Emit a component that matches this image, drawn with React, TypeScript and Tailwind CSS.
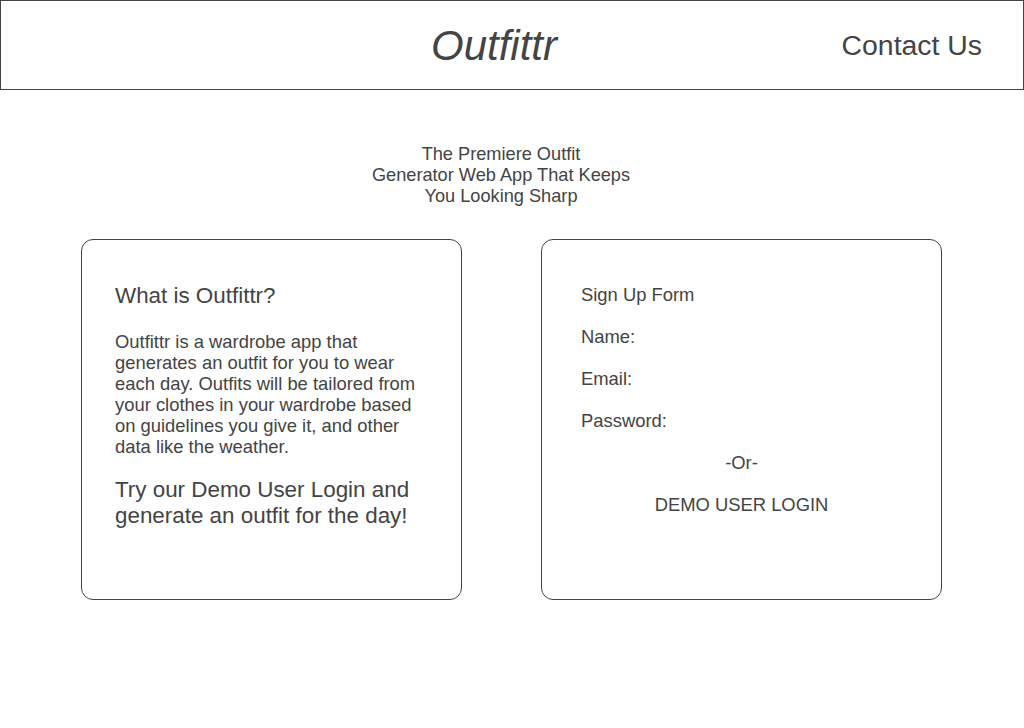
export default function App() {
  return (
    <div className="min-h-[728px] bg-white text-[#444] font-['Liberation_Sans',Arial,sans-serif]">
      {/* Header */}
      <header className="h-[90px] border border-[#444] flex items-center">
        <h1 className="ml-[430px] mt-[2px] text-[42px] italic leading-none">Outfittr</h1>
        <a href="#contact" className="ml-auto mr-[41px] mt-[1px] text-[28.4px] leading-none">
          Contact Us
        </a>
      </header>

      {/* Tagline */}
      <p className="mt-[54px] ml-[351px] w-[300px] text-center text-[18.2px] leading-[21px]">
        The Premiere Outfit
        <br />
        Generator Web App That Keeps
        <br />
        You Looking Sharp
      </p>

      {/* Cards */}
      <div className="mt-[32px] pl-[81px] flex gap-[79px]">
        <section className="w-[381px] h-[361px] border border-[#444] rounded-[12px] pt-[43px] pl-[33px]">
          <h2 className="text-[22.4px] leading-[26px]">What is Outfittr?</h2>
          <p className="mt-[22px] w-[314px] text-[18.4px] leading-[21px]">
            Outfittr is a wardrobe app that generates an outfit for you to wear each day. Outfits
            will be tailored from your clothes in your wardrobe based on guidelines you give it, and
            other data like the weather.
          </p>
          <p className="mt-[20px] w-[314px] text-[22.4px] leading-[26px]">
            Try our Demo User Login and generate an outfit for the day!
          </p>
        </section>

        <section className="w-[401px] h-[361px] border border-[#444] rounded-[12px] pt-[44px] px-[39px] flex flex-col gap-[21px] text-[18.4px] leading-[21px]">
          <div>Sign Up Form</div>
          <div>Name:</div>
          <div>Email:</div>
          <div>Password:</div>
          <div className="text-center">-Or-</div>
          <button className="text-center">DEMO USER LOGIN</button>
        </section>
      </div>
    </div>
  );
}
